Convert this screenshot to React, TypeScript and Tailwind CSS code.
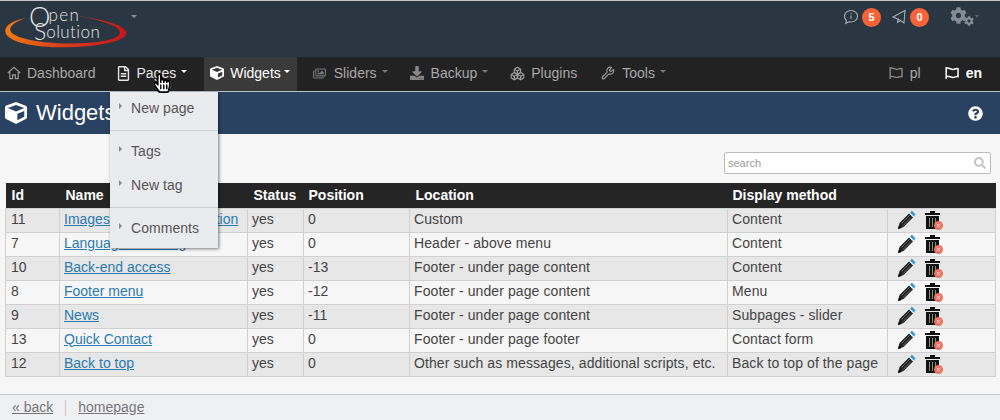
import type { ReactNode } from "react";
import { Boxes, Wrench } from "lucide-react";
import {
  FaCog,
  FaCube,
  FaDownload,
  FaHandPointer,
  FaQuestionCircle,
  FaRegFileAlt,
  FaRegHandPointer,
  FaRegImages,
  FaSearch,
} from "react-icons/fa";

const rows = [
  ["11", "Images slider administration", "yes", "0", "Custom", "Content"],
  ["7", "Language choosing", "yes", "0", "Header - above menu", "Content"],
  ["10", "Back-end access", "yes", "-13", "Footer - under page content", "Content"],
  ["8", "Footer menu", "yes", "-12", "Footer - under page content", "Menu"],
  ["9", "News", "yes", "-11", "Footer - under page content", "Subpages - slider"],
  ["13", "Quick Contact", "yes", "0", "Footer - under page footer", "Contact form"],
  ["12", "Back to top", "yes", "0", "Other such as messages, additional scripts, etc.", "Back to top of the page"],
];

function Logo() {
  return (
    <svg width="130" height="52" viewBox="0 0 130 52" className="block">
      <defs>
        <linearGradient id="ring" x1="0" x2="1" y1="0" y2="0">
          <stop offset="0" stopColor="#f07a12" />
          <stop offset="0.45" stopColor="#d8401a" />
          <stop offset="1" stopColor="#c8141c" />
        </linearGradient>
      </defs>
      <path
        d="M26 17 C10 20 3 26 6 33 C12 44 50 49 90 45 C115 42 128 37 126 31 C123 23 100 18 78 15 C100 19 118 24 120 31 C121 37 105 41 85 42 C50 44 18 39 11 31 C8 26 14 21 26 17 Z"
        fill="url(#ring)"
      />
      <text x="29" y="26" fill="#e4e4e4" fontFamily="Lato, sans-serif" fontWeight="300" fontSize="27">
        O
        <tspan dy="-6" dx="-2" fontSize="17" letterSpacing="1.4">
          pen
        </tspan>
      </text>
      <text x="34" y="39" fill="#e4e4e4" fontFamily="Lato, sans-serif" fontWeight="300" fontSize="23">
        S
        <tspan dy="-2" fontSize="17" letterSpacing="0.4">
          olution
        </tspan>
      </text>
    </svg>
  );
}

function HomeIcon() {
  return (
    <svg width="14" height="14" viewBox="0 0 14 14" fill="none" stroke="#9a9a9a" strokeWidth="1.2">
      <path d="M0.8 7 L7 1.2 L13.2 7" />
      <path d="M2.8 6 V12.6 H5.6 V8.8 H8.4 V12.6 H11.2 V6" />
    </svg>
  );
}

function Flag({ color, width = 1.4 }: { color: string; width?: number }) {
  return (
    <svg width="14" height="14" viewBox="0 0 14 14" fill="none" stroke={color} strokeWidth={width}>
      <path d="M1.2 1 V13" />
      <path d="M1.2 2.4 C3.6 1 6 3.8 8.4 3.4 C10 3.1 11.5 2 13 2.6 V10.6 C11.3 10 10 11.4 8 11.4 C5.6 11.4 3.6 9.6 1.2 10.6" />
    </svg>
  );
}

function NavItem({
  icon,
  label,
  caret,
  active,
  dim,
  caretClass = "ml-[5px]",
  className = "",
}: {
  icon: ReactNode;
  label: string;
  caret?: boolean;
  active?: boolean;
  dim?: boolean;
  caretClass?: string;
  className?: string;
}) {
  return (
    <div
      className={`flex h-[34px] items-center pb-[2px] text-[14px] ${
        active ? "bg-[#3a3a3a] text-white" : dim ? "text-[#a8a8a8]" : "text-[#e6e6e6]"
      } ${className}`}
    >
      {icon}
      <span className="flex items-center">
        {label}
        {caret && (
          <span
            className={`mb-[4px] inline-block border-x-[3.5px] border-t-[3px] border-x-transparent ${
              dim ? "border-t-[#777]" : "border-t-white"
            } ${caretClass}`}
          />
        )}
      </span>
    </div>
  );
}

function Pencil() {
  return (
    <svg width="19" height="20" viewBox="0 0 19 20">
      <path d="M1 19 L2.5 13 L12 3.5 L16 7.5 L6.5 17 Z" fill="#222" />
      <path d="M4.5 13.5 L12.5 5.5 M6 15.5 L14 7.5" stroke="#666" strokeWidth="1" />
      <path d="M13 2.5 L15 0.8 L18.5 4.2 L17 6.5 Z" fill="#3a9ad0" />
      <path d="M1 19 L2 15.5 L4.5 18 Z" fill="#000" />
    </svg>
  );
}

function Trash() {
  return (
    <svg width="20" height="21" viewBox="0 0 20 21">
      <path d="M1 3 H6 V1 H11 V3 H16 V5 H1 Z" fill="#111" />
      <path d="M2 6 H15 V19 H2 Z" fill="#111" />
      <path d="M5.5 8 V17 M8.5 8 V17 M11.5 8 V17" stroke="#888" strokeWidth="1" />
      <circle cx="14.5" cy="15.5" r="4.5" fill="#e8735f" />
      <path d="M12.8 13.8 L16.2 17.2 M16.2 13.8 L12.8 17.2" stroke="#fbe3de" strokeWidth="1" />
    </svg>
  );
}

function Badge({ value }: { value: string }) {
  return (
    <span className="flex h-[19px] w-[19px] items-center justify-center rounded-full bg-[#f8633a] text-[11px] font-bold text-white">
      {value}
    </span>
  );
}

function MenuLink({ label, className = "" }: { label: string; className?: string }) {
  return (
    <div className={`flex items-center text-[14px] tracking-[0.05px] text-[#555] ${className}`}>
      <span className="mb-[4px] ml-[9px] mr-[9px] inline-block border-y-[3px] border-l-[3px] border-y-transparent border-l-[#888]" />
      {label}
    </div>
  );
}

export default function App() {
  return (
    <div className="relative h-[420px] w-[1000px] overflow-hidden bg-[#f6f6f6] font-['Liberation_Sans',Arial,sans-serif]">
      {/* top bar */}
      <header className="flex h-[57px] items-start justify-between border-t border-t-[#c4c8cc] bg-[#2a3642] pr-[21px]">
        <div className="flex items-start">
          <Logo />
          <span className="ml-[1px] mt-[14px] inline-block border-x-[3px] border-t-[3px] border-x-transparent border-t-[#8a929a]" />
        </div>
        <div className="mt-[6px] flex items-center text-[#8f979f]">
          <svg width="16" height="16" viewBox="0 0 16 16" fill="none" stroke="#a5acb3" strokeWidth="1.1">
            <path d="M8 1.5 C4.3 1.5 1.5 4 1.5 7.3 C1.5 9 2.3 10.4 3.5 11.4 L2.7 14.5 L6 12.8 C6.6 12.9 7.3 13 8 13 C11.7 13 14.5 10.5 14.5 7.3 C14.5 4 11.7 1.5 8 1.5 Z" />
            <path d="M8 6.5 V10 M8 4 V5.2" />
          </svg>
          <span className="ml-[3px]">
            <Badge value="5" />
          </span>
          <svg className="ml-[11px]" width="15" height="16" viewBox="0 0 15 16" fill="none" stroke="#a5acb3" strokeWidth="1.1">
            <path d="M1 8 L13 1.5 L12 14 L7 10.5 Z" />
            <path d="M6 10 L5.5 13.5 L8 12" />
          </svg>
          <span className="ml-[3px]">
            <Badge value="0" />
          </span>
          <span className="relative ml-[21px] block h-[20px] w-[24px]">
            <FaCog className="absolute left-0 top-0 text-[#848c94]" size={17} />
            <FaCog className="absolute left-[14px] top-[9px] text-[#848c94]" size={10} />
          </span>
          <span className="mb-[2px] ml-[1px] inline-block border-x-[2.5px] border-t-[3px] border-x-transparent border-t-[#59626b]" />
        </div>
      </header>

      {/* main nav */}
      <nav className="flex h-[35px] items-start justify-between border-b border-b-[#b8c0c8] bg-[#222222] pl-[7px] pr-[18px]">
        <div className="flex items-start">
          <NavItem dim className="gap-[6px]" icon={<HomeIcon />} label="Dashboard" />
          <NavItem className="ml-[20px] gap-[6px]" icon={<FaRegFileAlt size={15} />} label="Pages" caret />
          <NavItem
            active
            className="ml-[17px] gap-[6px] pl-[6px] pr-[7px]"
            caretClass="ml-[3px]"
            icon={<FaCube size={14} />}
            label="Widgets"
            caret
          />
          <NavItem dim className="ml-[16px] gap-[8px]" icon={<FaRegImages size={13} className="text-[#777]" />} label="Sliders" caret />
          <NavItem dim className="ml-[22px] gap-[7px]" icon={<FaDownload size={14} className="text-[#888]" />} label="Backup" caret />
          <NavItem dim className="ml-[22px] gap-[6px]" icon={<Boxes size={15} className="text-[#999]" />} label="Plugins" />
          <NavItem dim className="ml-[24px] gap-[7px]" icon={<Wrench size={14} className="text-[#999]" />} label="Tools" caret />
        </div>
        <div className="flex items-start">
          <NavItem dim className="gap-[7px]" icon={<Flag color="#888" />} label="pl" />
          <div className="ml-[24px] flex h-[34px] items-center gap-[7px] pb-[2px] text-[14px] font-bold text-white">
            <Flag color="#fff" width={1.5} />
            <span>en</span>
          </div>
        </div>
      </nav>

      {/* title bar */}
      <div className="flex h-[42px] items-center justify-between bg-[#2a4261] pl-[5px] pr-[17px] text-white">
        <div className="flex items-center gap-[9px]">
          <FaCube size={22} />
          <h1 className="text-[22px] leading-none">Widgets</h1>
        </div>
        <FaQuestionCircle size={15} />
      </div>

      {/* search */}
      <div className="flex justify-end pr-[9px] pt-[18px]">
        <div className="flex h-[22px] w-[267px] items-center justify-between rounded-[2px] border border-[#bbb] bg-white pl-[3px] pr-[4px] text-[11px] text-[#999]">
          <span>search</span>
          <FaSearch size={12} className="text-[#c4c4c4]" />
        </div>
      </div>

      {/* table */}
      <div className="px-[5px] pt-[9px]">
        <table className="w-[990px] table-fixed border-collapse text-[14px] text-[#444]">
          <colgroup>
            <col className="w-[54px]" />
            <col className="w-[188px]" />
            <col className="w-[56px]" />
            <col className="w-[106px]" />
            <col className="w-[318px]" />
            <col className="w-[160px]" />
            <col className="w-[108px]" />
          </colgroup>
          <thead>
            <tr className="h-[25px] bg-[#252525] text-left text-white">
              <th className="pl-[6px] font-bold">Id</th>
              <th className="pl-[6px] font-bold">Name</th>
              <th className="pl-[6px] font-bold">Status</th>
              <th className="pl-[5px] font-bold">Position</th>
              <th className="pl-[6px] font-bold">Location</th>
              <th className="pl-[5px] font-bold">Display method</th>
              <th />
            </tr>
          </thead>
          <tbody>
            {rows.map((row, i) => (
              <tr key={row[0]} className={`h-[24px] ${i % 2 === 0 ? "bg-[#e7e7e7]" : "bg-[#f6f6f6]"}`}>
                <td className="border border-[#d0d0d0] pb-[2px] pl-[5px]">{row[0]}</td>
                <td className="truncate border border-[#d0d0d0] pb-[2px] pl-[4px]">
                  <a href="#" className="text-[#2a7ab0] underline">
                    {row[1]}
                  </a>
                </td>
                <td className="border border-[#d0d0d0] pb-[2px] pl-[4px]">{row[2]}</td>
                <td className="border border-[#d0d0d0] pb-[2px] pl-[4px]">{row[3]}</td>
                <td className="border border-[#d0d0d0] pb-[2px] pl-[4px] tracking-[0.09px]">{row[4]}</td>
                <td className="border border-[#d0d0d0] pb-[2px] pl-[4px] tracking-[0.09px]">{row[5]}</td>
                <td className="border border-[#d0d0d0] pl-[9px]">
                  <div className="flex items-center gap-[8px]">
                    <Pencil />
                    <Trash />
                  </div>
                </td>
              </tr>
            ))}
          </tbody>
        </table>
      </div>

      {/* footer */}
      <footer className="mt-[17px] flex h-[27px] items-center border-t border-t-[#c8c8c8] bg-[#eff0f2] pl-[12px] text-[14px] text-[#777]">
        <a href="#" className="underline">« back</a>
        <span className="mx-[12px] h-[16px] w-px bg-[#c4c4c4]" />
        <a href="#" className="underline">homepage</a>
      </footer>

      {/* open dropdown */}
      <div className="absolute left-[110px] top-[92px] h-[156px] w-[108px] bg-[#eaebef] shadow-[1px_1px_3px_rgba(0,0,0,0.5)]">
        <MenuLink label="New page" className="h-[32px]" />
        <div className="mt-[6px] border-t border-t-[#cfcfcf]" />
        <MenuLink label="Tags" className="mt-[4px] h-[32px]" />
        <MenuLink label="New tag" className="mt-[2px] h-[32px]" />
        <div className="mt-[6px] border-t border-t-[#cfcfcf]" />
        <MenuLink label="Comments" className="mt-[4px] h-[32px]" />
      </div>

      {/* mouse cursor */}
      <div className="absolute left-[152px] top-[73px] h-[20px] w-[16px]">
        <FaHandPointer size={20} className="absolute left-0 top-0 text-white" />
        <FaRegHandPointer size={20} className="absolute left-0 top-0 text-black" />
      </div>
    </div>
  );
}
